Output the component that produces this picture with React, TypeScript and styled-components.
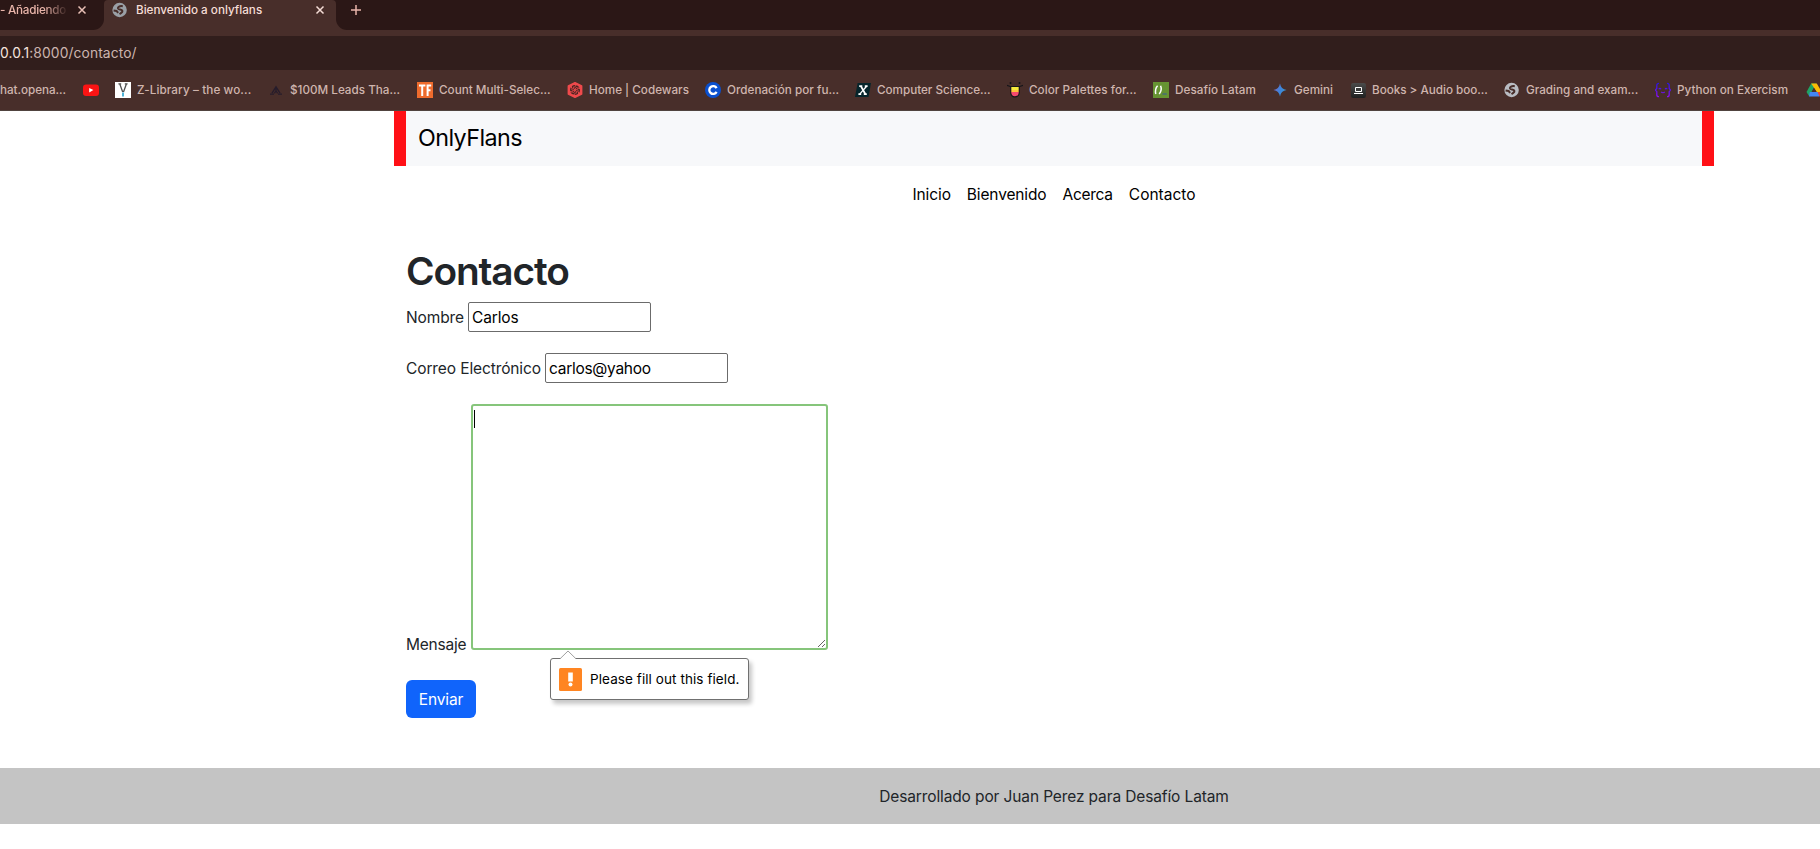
import React from 'react';
import styled, { createGlobalStyle } from 'styled-components';

const GlobalStyle = createGlobalStyle`
  *, *::before, *::after { box-sizing: border-box; }
  body {
    margin: 0;
    background: #fff;
    color: #212529;
    font-family: Inter, 'Liberation Sans', sans-serif;
    font-size: 15.5px;
    line-height: 24px;
    overflow: hidden;
  }
`;

const Screen = styled.div`
  width: 100%;
  height: 849px;
  overflow: hidden;
`;

/* ---------- Browser chrome ---------- */

const Chrome = styled.header`
  height: 111px;
  background: #482e2a;
  border-bottom: 1px solid #50433f;
  overflow: hidden;
`;

const TabStrip = styled.div`
  display: flex;
  height: 30px;
  font-size: 11.7px;
  font-weight: 500;
  line-height: 20px;
`;

const BackgroundTab = styled.div`
  display: flex;
  justify-content: space-between;
  width: 104px;
  padding-right: 17px;
  background: #2b1716;
  border-bottom-right-radius: 11px;
  color: #e9b5aa;
`;

const FadedTitle = styled.span`
  width: 68px;
  white-space: nowrap;
  letter-spacing: -0.25px;
  -webkit-mask-image: linear-gradient(90deg, #000 44px, rgba(0, 0, 0, 0.1) 66px);
  mask-image: linear-gradient(90deg, #000 44px, rgba(0, 0, 0, 0.1) 66px);
`;

const ActiveTabSlot = styled.div`
  width: 232px;
  background: linear-gradient(#2b1716 5px, #482e2a 5px);
`;

const ActiveTab = styled.div`
  display: flex;
  height: 30px;
  padding: 0 11px 0 8px;
  background: #482e2a;
  border-radius: 4px 4px 0 0;
  color: #f5ddd6;
`;

const TabTitle = styled.span`
  flex: 1;
  margin-left: 8px;
`;

const StripRest = styled.div`
  flex: 1;
  padding-left: 14px;
  background: #2b1716;
  border-bottom-left-radius: 11px;
  color: #e9b5aa;
`;

const TabIcon = styled.svg<{ $top?: number }>`
  display: block;
  flex: none;
  margin-top: ${(p) => p.$top ?? 0}px;
`;

const AddressBar = styled.div`
  height: 34px;
  margin-top: 6px;
  background: #311e1c;
  color: #ccb5af;
  font-size: 13.8px;
  line-height: 34px;
  letter-spacing: 0.11px;
`;

const Host = styled.span`
  color: #f5e4df;
`;

const Bookmarks = styled.nav`
  display: flex;
  align-items: center;
  width: 1900px;
  height: 40px;
  font-size: 11.7px;
  font-weight: 500;
  color: #cfb5ae;
`;

const Bookmark = styled.div<{ $width: number }>`
  display: flex;
  flex: none;
  align-items: center;
  gap: 6px;
  width: ${(p) => p.$width}px;
  white-space: nowrap;

  svg { flex: none; display: block; }
`;

const BookmarkLabel = styled.span<{ $spacing: number }>`
  letter-spacing: ${(p) => p.$spacing}px;
`;

/* ---------- Page ---------- */

const Page = styled.div`
  display: flex;
  flex-direction: column;
  align-items: center;
  width: 2108px;
`;

const Brand = styled.div`
  width: 1320px;
  height: 55px;
  padding-left: 12px;
  background: #f7f8fa;
  border: solid #ff1016;
  border-width: 0 12px;
  color: #000;
  font-size: 23.3px;
  line-height: 53px;
  letter-spacing: -0.58px;
`;

const Menu = styled.nav`
  display: flex;
  gap: 16px;
  height: 56px;
  padding-top: 2px;
  align-items: center;
  color: #000;
`;

const MenuLink = styled.a<{ $spacing: number }>`
  letter-spacing: ${(p) => p.$spacing}px;
`;

const Content = styled.main`
  width: 1320px;
  height: 546px;
  padding: 25px 12px 0;
`;

const Title = styled.h1`
  margin: 0 0 7px;
  font-size: 38.8px;
  font-weight: 560;
  line-height: 48px;
  letter-spacing: -1.12px;
`;

const Field = styled.div<{ $gap: number; $end?: boolean }>`
  display: flex;
  align-items: ${(p) => (p.$end ? 'flex-end' : 'center')};
  margin-bottom: ${(p) => p.$gap}px;
`;

const Label = styled.label<{ $width: number; $spacing: number; $drop?: number }>`
  width: ${(p) => p.$width}px;
  padding-top: 2px;
  margin-bottom: ${(p) => -(p.$drop ?? 0)}px;
  letter-spacing: ${(p) => p.$spacing}px;
`;

const TextInput = styled.input<{ $spacing: number }>`
  width: 183px;
  height: 30px;
  padding: 1px 3px;
  border: 1px solid #6b6b6b;
  border-radius: 2px;
  outline: none;
  background: #fff;
  color: #000;
  font: inherit;
  letter-spacing: ${(p) => p.$spacing}px;
`;

const MessageBox = styled.div`
  position: relative;
  width: 357px;
  height: 246px;
`;

const Message = styled.textarea`
  display: block;
  width: 357px;
  height: 246px;
  padding: 2px;
  border: 2px solid #86c57b;
  border-radius: 3px;
  outline: none;
  background: #fff;
  font: inherit;
`;

const Caret = styled.span`
  position: absolute;
  top: 6px;
  left: 3px;
  width: 1px;
  height: 18px;
  background: #000;
`;

const Bubble = styled.div`
  position: absolute;
  top: 254px;
  left: 79px;
  display: flex;
  align-items: center;
  gap: 8px;
  width: 199px;
  height: 42px;
  padding-left: 8px;
  border: 1px solid #707070;
  border-radius: 3px;
  background: #fff;
  box-shadow: 3px 4px 4px rgba(0, 0, 0, 0.22);
  color: #000;
  font-size: 13.5px;
  letter-spacing: 0.08px;
  white-space: nowrap;
`;

const BubbleArrow = styled.svg`
  position: absolute;
  top: -9px;
  left: 8px;
`;

const SubmitButton = styled.button`
  display: block;
  width: 70px;
  height: 38px;
  padding: 2px 0 0;
  border: 0;
  border-radius: 6px;
  background: #1064fb;
  color: #fff;
  font: inherit;
  letter-spacing: -0.15px;
`;

const Footer = styled.footer`
  width: 100%;
  height: 56px;
  background: #c4c4c4;
  line-height: 57px;
  text-align: center;
  letter-spacing: -0.12px;
`;

/* ---------- Icons ---------- */

const Globe = ({ color = '#b9bcc2', hole = '#482e2a', top = 0 }: { color?: string; hole?: string; top?: number }) => (
  <TabIcon $top={top} width="16" height="16" viewBox="0 0 16 16">
    <circle cx="7.6" cy="8" r="7.2" fill={color} />
    <g fill="none" stroke={hole} strokeWidth="2">
      <path d="M10.8 4.2C7.6 3.6 5.6 5 6 6.5c.5 1.4 4 .6 4.4 2.5.2 1.6-2 1.8-2.6 3.4" />
      <path d="M1.6 8.6l3 .4 1.6 1.8" />
    </g>
  </TabIcon>
);

const Close = ({ color, top }: { color: string; top: number }) => (
  <TabIcon $top={top} width="10" height="10" viewBox="0 0 10 10" stroke={color} strokeWidth="1.5">
    <path d="M1.5 1.5l7 7M8.5 1.5l-7 7" />
  </TabIcon>
);

const YouTube = () => (
  <svg width="16" height="16" viewBox="0 0 16 16">
    <rect y="2.5" width="16" height="11.4" rx="3" fill="#fa1414" />
    <path d="M6.2 5.9v4.5L10.4 8.1z" fill="#fff" />
  </svg>
);

const ZLibrary = () => (
  <svg width="16" height="16" viewBox="0 0 16 16">
    <rect width="16" height="16" fill="#fff" />
    <path d="M3.4 1.8h2.8M9.8 1.8h2.8M4.8 2l2.9 8M11.4 2 8.5 10" stroke="#505050" strokeWidth="1.3" fill="none" />
    <path d="M8 10.5v4" stroke="#4fb4d8" strokeWidth="2" />
  </svg>
);

const Leads = () => (
  <svg width="16" height="16" viewBox="0 0 16 16" fill="none" stroke="#261c2b">
    <path d="M2 12.2h4M10 12.2h4" strokeWidth="1.3" />
    <path d="M4 11.2 8 4.8l4 6.4M6.4 11.3 8 8.7l1.6 2.6M8 5v4" strokeWidth="1.3" />
  </svg>
);

const TF = () => (
  <svg width="16" height="16" viewBox="0 0 16 16">
    <rect width="16" height="16" fill="#ee6b2d" />
    <path d="M2 3.5h6.4M5.2 3v11M10.6 14V3M9.6 3.5h4.6M10.5 8.3h3" stroke="#fff" strokeWidth="2" fill="none" />
  </svg>
);

const Codewars = () => (
  <svg width="16" height="16" viewBox="0 0 16 16">
    <path d="M8 .8 14.6 4v8L8 15.2 1.4 12V4z" fill="#ef4a4c" stroke="#ef4a4c" strokeWidth="1.6" strokeLinejoin="round" />
    <circle cx="8" cy="8" r="5" fill="#4a2523" />
    <g fill="none" stroke="#ef4a4c" strokeWidth=".9">
      {[0, 60, 120, 180, 240, 300].map((a) => (
        <path key={a} d="M8 8c.2-1.8 1-2.7 2.5-2.4M8 5.2c-.2-1.3.6-2.1 1.8-2.3" transform={`rotate(${a} 8 8)`} />
      ))}
    </g>
  </svg>
);

const Coursera = () => (
  <svg width="16" height="16" viewBox="0 0 16 16">
    <circle cx="8" cy="8" r="8" fill="#0a50cf" />
    <path d="M11.6 6.1A3.9 3.9 0 1 0 11.6 9.9" fill="none" stroke="#fff" strokeWidth="2.3" />
  </svg>
);

const Edx = () => (
  <svg width="16" height="16" viewBox="0 0 16 16">
    <path d="M2.6 1H16l-2.5 14H0z" fill="#06252b" />
    <path d="M4.2 4.1h3.1M9.8 4.1h2.8M3.4 12.1h2.8M8.8 12.1h3M5.8 4l4.5 8" stroke="#fff" strokeWidth="1.7" fill="none" />
    <path d="M11.6 4.2 4.9 11.9" stroke="#fff" strokeWidth="1.3" />
  </svg>
);

const Palette = () => (
  <svg width="16" height="16" viewBox="0 0 16 16">
    <path d="M3.2 4.5h9.6v6.2c0 2.5-2 4.8-4.8 4.8s-4.8-2.3-4.8-4.8z" fill="#17161a" />
    <path d="M4.3 5h7.4v3H4.3z" fill="#f7ea3c" />
    <path d="M4.3 8h7.4v2.2H4.3z" fill="#ffc23a" />
    <path d="M4.3 10h7.4v.6a3.7 3.6 0 0 1-7.4 0z" fill="#f5496e" />
    <path d="M0 3.3 3.2 4.5h9.6L16 3.3" stroke="#17161a" strokeWidth="1.2" fill="none" />
    <circle cx="3.5" cy="1" r="1" fill="#17161a" />
    <circle cx="12.5" cy="1" r="1" fill="#17161a" />
  </svg>
);

const Desafio = () => (
  <svg width="16" height="16" viewBox="0 0 16 16">
    <rect width="16" height="16" fill="#669332" />
    <path d="M4.6 3.8C3 5.5 2.1 8.8 2.8 12M7.6 3.8c1.1 2.7.4 6-1.4 8.2" stroke="#fff" strokeWidth="1.5" fill="none" />
    <path d="M9.4 12h4.4" stroke="#4a7070" strokeWidth="1.6" />
  </svg>
);

const Gemini = () => (
  <svg width="16" height="16" viewBox="0 0 16 16">
    <defs>
      <linearGradient id="gem" x1="0" x2="1" y1=".3" y2=".7">
        <stop offset="0" stopColor="#7d6bc4" />
        <stop offset=".5" stopColor="#3d84dc" />
        <stop offset="1" stopColor="#3a9bd0" />
      </linearGradient>
    </defs>
    <path d="M8 1.4C8.6 5.2 10.8 7.4 14.6 8 10.8 8.6 8.6 10.8 8 14.6 7.4 10.8 5.2 8.6 1.4 8 5.2 7.4 7.4 5.2 8 1.4z" fill="url(#gem)" />
  </svg>
);

const Books = () => (
  <svg width="15" height="15" viewBox="0 0 15 15">
    <defs>
      <linearGradient id="bk" x1="0" x2="0" y1="0" y2="1">
        <stop offset="0" stopColor="#4b4b4b" />
        <stop offset="1" stopColor="#1f2020" />
      </linearGradient>
    </defs>
    <rect width="15" height="15" rx="2.2" fill="url(#bk)" />
    <path d="M4.5 4.5h6v4h-6zM3 10.5h9" fill="none" stroke="#fff" />
  </svg>
);

const Exercism = () => (
  <svg width="16" height="16" viewBox="0 0 16 16" fill="none" strokeWidth="1.3">
    <defs>
      <linearGradient id="ex" gradientUnits="userSpaceOnUse" x1="0" x2="0" y1="1" y2="15">
        <stop offset="0" stopColor="#2a16e0" />
        <stop offset="1" stopColor="#8a10f0" />
      </linearGradient>
    </defs>
    <g stroke="url(#ex)">
      <path d="M4 1.3c-1.6 0-2.2.5-2.2 2v3L.5 8l1.3 1.7v3c0 1.5.6 2 2.2 2M12 1.3c1.6 0 2.2.5 2.2 2v3L15.5 8l-1.3 1.7v3c0 1.5-.6 2-2.2 2" />
      <path d="M3.8 7.3C4.4 6 5.4 6 6 7.3M10 7.3c.6-1.3 1.6-1.3 2.2 0M6.2 9.8c1 1.2 2.6 1.2 3.6 0" strokeWidth="1.1" />
    </g>
  </svg>
);

const Drive = () => (
  <svg width="18" height="16" viewBox="0 0 18 16">
    <path d="M6.2 1.5h5L4.2 14.2 1.5 10z" fill="#1fa463" />
    <path d="M6.2 1.5h5.6l5 8.5h-5z" fill="#fbbc05" />
    <path d="M4.8 10h12L14.5 14.5H4z" fill="#4285f4" />
    <path d="M12.5 10h4.3l-2.3 4.5z" fill="#ea4335" />
    <path d="M9 6 11.3 10H6.8z" fill="#482e2a" />
  </svg>
);

const bookmarks = [
  { label: 'hat.opena...', width: 83, spacing: -0.05 },
  { icon: <YouTube />, width: 32 },
  { icon: <ZLibrary />, label: 'Z-Library – the wo...', width: 153, spacing: 0.11 },
  { icon: <Leads />, label: '$100M Leads Tha...', width: 149, spacing: 0 },
  { icon: <TF />, label: 'Count Multi-Selec...', width: 150, spacing: 0 },
  { icon: <Codewars />, label: 'Home | Codewars', width: 138, spacing: 0 },
  { icon: <Coursera />, label: 'Ordenación por fu...', width: 150, spacing: 0.01 },
  { icon: <Edx />, label: 'Computer Science...', width: 152, spacing: -0.02 },
  { icon: <Palette />, label: 'Color Palettes for...', width: 146, spacing: 0.05 },
  { icon: <Desafio />, label: 'Desafío Latam', width: 119, spacing: 0.06 },
  { icon: <Gemini />, label: 'Gemini', width: 79, spacing: 0.02 },
  { icon: <Books />, label: 'Books > Audio boo...', width: 153, spacing: -0.02 },
  { icon: <Globe />, label: 'Grading and exam...', width: 151, spacing: 0 },
  { icon: <Exercism />, label: 'Python on Exercism', width: 150, spacing: 0.02 },
  { icon: <Drive />, width: 30 },
];

const links = [
  { label: 'Inicio', spacing: -0.1 },
  { label: 'Bienvenido', spacing: -0.14 },
  { label: 'Acerca', spacing: -0.25 },
  { label: 'Contacto', spacing: 0 },
];

export default function App() {
  return (
    <Screen>
      <GlobalStyle />
      <Chrome>
        <TabStrip>
          <BackgroundTab>
            <FadedTitle>- Añadiendo</FadedTitle>
            <Close color="#e9c0b6" top={5} />
          </BackgroundTab>
          <ActiveTabSlot>
            <ActiveTab>
              <Globe color="#9aa0a6" top={2} />
              <TabTitle>Bienvenido a onlyflans</TabTitle>
              <Close color="#f5ddd6" top={5} />
            </ActiveTab>
          </ActiveTabSlot>
          <StripRest>
            <TabIcon $top={4} width="12" height="12" viewBox="0 0 12 12" stroke="#e9b5aa" strokeWidth="1.5">
              <path d="M6 1v10M1 6h10" />
            </TabIcon>
          </StripRest>
        </TabStrip>
        <AddressBar>
          <Host>0.0.1</Host>:8000/contacto/
        </AddressBar>
        <Bookmarks>
          {bookmarks.map((b, i) => (
            <Bookmark key={i} $width={b.width}>
              {b.icon}
              {b.label && <BookmarkLabel $spacing={b.spacing ?? 0}>{b.label}</BookmarkLabel>}
            </Bookmark>
          ))}
        </Bookmarks>
      </Chrome>

      <Page>
        <Brand>OnlyFlans</Brand>
        <Menu>
          {links.map((l) => (
            <MenuLink key={l.label} $spacing={l.spacing}>{l.label}</MenuLink>
          ))}
        </Menu>
        <Content>
          <Title>Contacto</Title>
          <Field $gap={21}>
            <Label $width={62} $spacing={-0.11}>Nombre</Label>
            <TextInput $spacing={-0.15} defaultValue="Carlos" />
          </Field>
          <Field $gap={21}>
            <Label $width={139} $spacing={-0.11}>Correo Electrónico</Label>
            <TextInput $spacing={-0.28} defaultValue="carlos@yahoo" />
          </Field>
          <Field $gap={30} $end>
            <Label $width={65} $spacing={-0.22} $drop={7}>Mensaje</Label>
            <MessageBox>
              <Message />
              <Caret />
              <Bubble>
                <BubbleArrow width="18" height="10" viewBox="0 0 18 10">
                  <path d="M1 9 9 1l8 8v1H1z" fill="#fff" />
                  <path d="M1 8.8 9 1l8 7.8" fill="none" stroke="#a0a0a0" />
                </BubbleArrow>
                <svg width="23" height="23" viewBox="0 0 23 23">
                  <rect width="23" height="23" rx="1.5" fill="#ff8522" />
                  <path d="M9.2 4.5h4.6v9H9.2z" fill="#fff" />
                  <circle cx="11.5" cy="16.4" r="2" fill="#fff" />
                </svg>
                Please fill out this field.
              </Bubble>
            </MessageBox>
          </Field>
          <SubmitButton type="button">Enviar</SubmitButton>
        </Content>
        <Footer>Desarrollado por Juan Perez para Desafío Latam</Footer>
      </Page>
    </Screen>
  );
}
